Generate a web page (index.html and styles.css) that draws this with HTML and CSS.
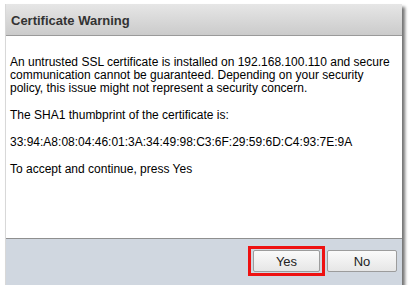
FILE: index.html
```html
<!DOCTYPE html>
<html lang="en">
<head>
    <meta charset="UTF-8">
    <title>Certificate Warning</title>
    <link rel="stylesheet" href="styles.css">
</head>
<body>
    <div class="dialog">
        <div class="dialog-header">Certificate Warning</div>
        <div class="dialog-body">
            <p>An untrusted SSL certificate is installed on 192.168.100.110 and secure communication cannot be guaranteed. Depending on your security policy, this issue might not represent a security concern.</p>
            <p>The SHA1 thumbprint of the certificate is:</p>
            <p>33:94:A8:08:04:46:01:3A:34:49:98:C3:6F:29:59:6D:C4:93:7E:9A</p>
            <p>To accept and continue, press Yes</p>
        </div>
        <div class="dialog-footer">
            <span class="highlight"><button class="btn">Yes</button></span>
            <button class="btn">No</button>
        </div>
    </div>
</body>
</html>
```

FILE: styles.css
```css
body {
    margin: 0;
    background-color: #ffffff;
    font-family: "Liberation Sans", Arial, sans-serif;
    color: #000;
}

.dialog {
    margin: 4px 0 0 5px;
    width: 397px;
    height: 281px;
    display: flex;
    flex-direction: column;
    box-sizing: border-box;
    border-left: 1px solid #d8d8d8;
    box-shadow: 3px 3px 3px rgba(0, 0, 0, 0.55);
    background-color: #fff;
}

.dialog-header {
    height: 32px;
    box-sizing: border-box;
    padding: 9px 0 0 5px;
    font-size: 13px;
    font-weight: bold;
    color: #333;
    background: linear-gradient(#e6e6e6, #cbcbcb);
    border-bottom: 1px solid #9a9a9a;
}

.dialog-body {
    flex-grow: 1;
    padding: 20px 8px 0 4px;
    font-size: 12px;
    line-height: 13px;
    border-bottom: 1px solid #8f8f8f;
}

.dialog-body p {
    margin: 0 0 14px 0;
}

.dialog-footer {
    height: 46px;
    box-sizing: border-box;
    background-color: #d0d7e0;
    display: flex;
    justify-content: flex-end;
    align-items: center;
    gap: 2px;
    padding: 0 5px 2px 0;
}

.btn {
    width: 70px;
    height: 22px;
    padding: 0;
    font-family: "Liberation Sans", Arial, sans-serif;
    font-size: 13px;
    color: #222;
    background: linear-gradient(#fafafa, #e6e6e6);
    border: 1px solid #9c9c9c;
    border-radius: 2px;
}

.highlight {
    display: flex;
    padding: 1px 2px;
    border: 3px solid #ee1111;
}

.highlight .btn {
    width: 67px;
}
```
